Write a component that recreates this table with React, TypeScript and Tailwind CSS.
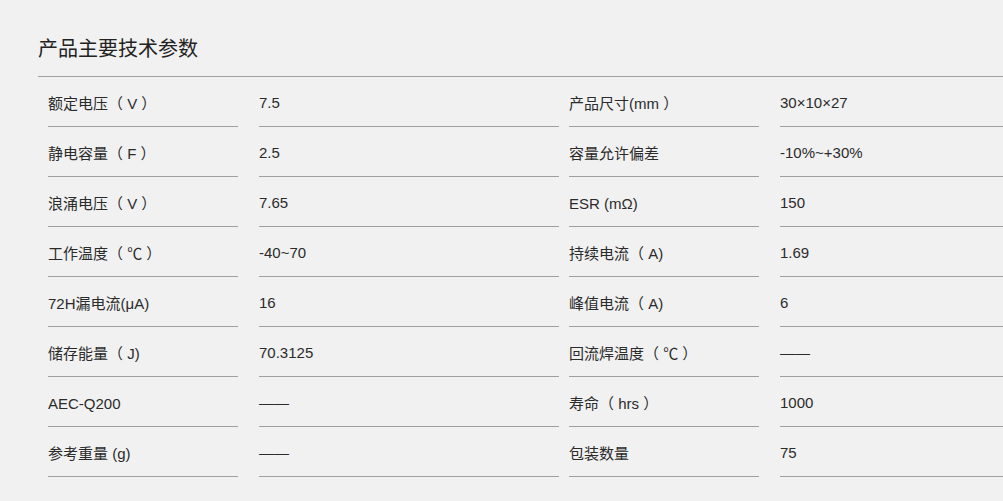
const SPECS: [string, string][] = [
  ["额定电压（ V ）", "7.5"],
  ["产品尺寸(mm ）", "30×10×27"],
  ["静电容量（ F ）", "2.5"],
  ["容量允许偏差", "-10%~+30%"],
  ["浪涌电压（ V ）", "7.65"],
  ["ESR (mΩ)", "150"],
  ["工作温度（ ℃ ）", "-40~70"],
  ["持续电流（ A)", "1.69"],
  ["72H漏电流(μA)", "16"],
  ["峰值电流（ A)", "6"],
  ["储存能量（ J)", "70.3125"],
  ["回流焊温度（ ℃ ）", "——"],
  ["AEC-Q200", "——"],
  ["寿命（ hrs ）", "1000"],
  ["参考重量 (g)", "——"],
  ["包装数量", "75"],
]

const FONT = "font-['Liberation_Sans','Noto_Sans_CJK_SC',sans-serif]"

export default function App() {
  return (
    <div className={`min-h-[501px] w-[1003px] overflow-hidden bg-[#f1f1f1] text-[#2b2b2b] ${FONT}`}>
      <div className="pl-[38px] pt-[36px]">
        <h2 className="w-[1100px] border-b border-[#a0a0a0] pb-[14px] text-[20px] leading-[26px] text-[#222]">
          产品主要技术参数
        </h2>
        <ul className="grid w-[1042px] grid-cols-2">
          {SPECS.map(([label, value]) => (
            <li key={label} className="flex">
              <span className="ml-[10px] h-[50px] w-[190px] border-b border-[#a0a0a0] pt-[17px] text-[15px] leading-[20px]">
                {label}
              </span>
              <span className="ml-[21px] h-[50px] w-[300px] border-b border-[#a0a0a0] pt-[16px] text-[15px] leading-[20px]">
                {value}
              </span>
            </li>
          ))}
        </ul>
      </div>
    </div>
  )
}
